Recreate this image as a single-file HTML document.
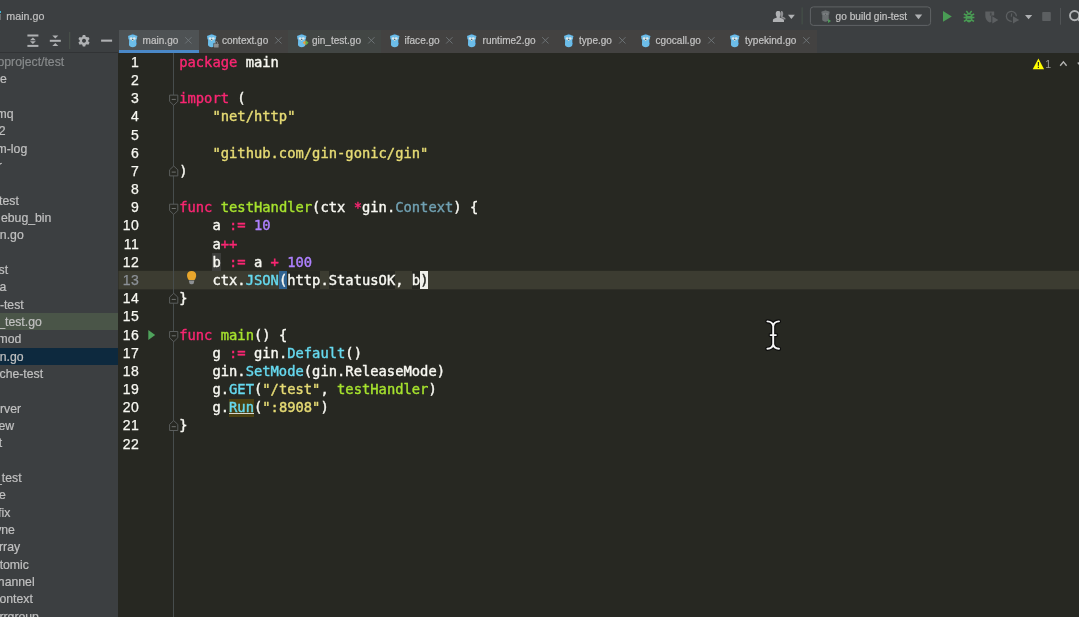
<!DOCTYPE html>
<html lang="en">
<head>
<meta charset="utf-8">
<title>main.go</title>
<style>
*{box-sizing:border-box;margin:0;padding:0}
html,body{width:1079px;height:617px;overflow:hidden;background:#3c3f41}
body{position:relative;font-family:"Liberation Sans",sans-serif;color:#bbbbbb;font-size:12px}
.abs{position:absolute}
#wrap{left:0;top:0;width:1079px;height:617px;will-change:transform}
svg{overflow:visible}
#topbar{left:0;top:0;width:1079px;height:30px;background:#3c3f41}
#title{left:6.3px;top:9.4px;font-size:10.7px;color:#c0c0c0;line-height:14px;-webkit-text-stroke:0.2px #c0c0c0}
#tabs{left:119px;top:30px;width:698px;height:22.5px;background:#434241}
#acttab{left:119px;top:30px;width:79.5px;height:20px;background:#4e5254}
#actline{left:119px;top:49.7px;width:79.5px;height:3.3px;background:#4a88c7}
.tl{position:absolute;top:34px;height:14px;font-size:10.05px;color:#c4c4c4;line-height:14px;white-space:nowrap;letter-spacing:0;-webkit-text-stroke:0.2px #c4c4c4}
.tx{position:absolute;top:37.2px}
#side{left:0;top:52.5px;width:118.4px;height:565px;background:#3c3f41;overflow:hidden}
.si{position:absolute;height:16px;line-height:16px;font-size:12.25px;color:#c0c0c0;white-space:nowrap;-webkit-text-stroke:0.2px #c0c0c0}
#editor{left:118.4px;top:52.5px;width:961px;height:565px;background:#272822;overflow:hidden}
#curline{left:118.4px;top:270.9px;width:961px;height:18.4px;background:#3c3c31}
#gline{left:173.2px;top:52.5px;width:1.2px;height:565px;background:#474d4d}
.ln{position:absolute;left:99.4px;width:40px;text-align:right;font-family:"Liberation Sans",sans-serif;font-size:14px;letter-spacing:0.53px;color:#f8f8f2;line-height:18.184px;height:18.184px;-webkit-text-stroke:0.25px #f8f8f2}
.cl{position:absolute;left:179.2px;white-space:pre;font-family:"DejaVu Sans Mono","Liberation Mono",monospace;font-size:13.8px;color:#f8f8f2;line-height:18.184px;height:18.184px;-webkit-text-stroke:0.4px}
.k{color:#f92672}.f{color:#a6e22e}.s{color:#e6db74}.n{color:#ae81ff}.c{color:#66d9ef}.t{color:#70a0b2}
.hl,.hd,.bm,.bc,.wu{padding:1.05px 0}
.hl{background:#3d3e3b}.hd{background:#272822}.bm{background:#2f6290}.bc{background:#f0f0ea;color:#272822}
.wu{padding:0.2px 0 1.9px;background:#4a4013;box-shadow:inset 0 -4.6px 0 -3.4px #4a4013}
</style>
</head>
<body>
<div id="wrap" class="abs">
<div id="topbar" class="abs"></div>
<div class="abs" style="left:0;top:11.4px;width:1.1px;height:1.8px;background:#3fb6d6"></div>
<div class="abs" style="left:0;top:13.6px;width:1.1px;height:6.2px;background:#6b6f71"></div>
<div id="title" class="abs">main.go</div>
<div id="tabs" class="abs"></div>
<div class="abs" style="left:287.8px;top:30px;width:93.3px;height:22.5px;background:#424644"></div>
<div id="acttab" class="abs"></div>
<div id="actline" class="abs"></div>

<svg class="abs" style="left:0;top:30px" width="119" height="22" viewBox="0 30 119 22">
<g fill="#afb1b3">
<rect x="27.4" y="34.5" width="11" height="2"/><rect x="27.4" y="44.9" width="11" height="2"/>
<path d="M30 40.2L32.9 37.5L35.8 40.2Z"/><path d="M30 41.2L35.8 41.2L32.9 43.9Z"/>
<rect x="49.8" y="39.8" width="11" height="2"/>
<path d="M52.3 35.6L58.3 35.6L55.3 38.6Z"/><path d="M52.3 46L55.3 43L58.3 46Z"/>
<rect x="101.1" y="39.6" width="11" height="2.1"/>
</g>
<rect x="69.2" y="32" width="1" height="17" fill="#4b544d"/>
<g transform="translate(84 40.8)" fill="#afb1b3">
<path fill-rule="evenodd" d="M-1.2 -5.8 L1.2 -5.8 L1.7 -4 L3.4 -3.5 L4.4 -3.9 L5.6 -1.8 L4.3 -0.6 L4.3 0.6 L5.6 1.8 L4.4 3.9 L2.7 3.4 L1.7 4 L1.2 5.8 L-1.2 5.8 L-1.7 4 L-2.7 3.4 L-4.4 3.9 L-5.6 1.8 L-4.3 0.6 L-4.3 -0.6 L-5.6 -1.8 L-4.4 -3.9 L-2.7 -3.4 L-1.7 -4 Z M0 -2 A2 2 0 1 0 0.001 -2 Z"/>
</g>
</svg>
<svg class="abs" style="left:128px;top:33.9px" width="9.4" height="13.3" viewBox="0 0 9.4 13.3"><circle cx="1.2" cy="2.6" r="1.2" fill="#5fb0de"/><circle cx="8.2" cy="2.6" r="1.2" fill="#5fb0de"/><path d="M0.3 4.2 C0.3 -0.6 9.1 -0.6 9.1 4.2 C9.1 5.2 8.4 5.4 8.3 6 L8.4 10.8 C8.4 14 1 14 1 10.8 L1.1 6 C1 5.4 0.3 5.2 0.3 4.2 Z" fill="#6cbde9"/><ellipse cx="3.2" cy="4.5" rx="1.4" ry="1.25" fill="#dde6e8"/><ellipse cx="6.2" cy="4.5" rx="1.4" ry="1.25" fill="#dde6e8"/><circle cx="4.7" cy="5.3" r="0.65" fill="#3a3a3a"/><rect x="4.2" y="5.9" width="1" height="1.1" fill="#e9d9c0"/><rect x="4.2" y="-0.1" width="1" height="0.9" fill="#3a86c8"/><circle cx="8.5" cy="9.4" r="0.55" fill="#3a86c8"/></svg>
<div class="tl" style="left:142.6px">main.go</div>
<svg class="tx" style="left:184.75px" width="6.7" height="6.7" viewBox="0 0 6.7 6.7"><path d="M0.2 0.2L6.5 6.5M6.5 0.2L0.2 6.5" stroke="#70767a" stroke-width="0.9" fill="none"/></svg>
<svg class="abs" style="left:206.9px;top:33.9px" width="9.4" height="13.3" viewBox="0 0 9.4 13.3"><circle cx="1.2" cy="2.6" r="1.2" fill="#5fb0de"/><circle cx="8.2" cy="2.6" r="1.2" fill="#5fb0de"/><path d="M0.3 4.2 C0.3 -0.6 9.1 -0.6 9.1 4.2 C9.1 5.2 8.4 5.4 8.3 6 L8.4 10.8 C8.4 14 1 14 1 10.8 L1.1 6 C1 5.4 0.3 5.2 0.3 4.2 Z" fill="#6cbde9"/><ellipse cx="3.2" cy="4.5" rx="1.4" ry="1.25" fill="#dde6e8"/><ellipse cx="6.2" cy="4.5" rx="1.4" ry="1.25" fill="#dde6e8"/><circle cx="4.7" cy="5.3" r="0.65" fill="#3a3a3a"/><rect x="4.2" y="5.9" width="1" height="1.1" fill="#e9d9c0"/><rect x="4.2" y="-0.1" width="1" height="0.9" fill="#3a86c8"/><circle cx="8.5" cy="9.4" r="0.55" fill="#3a86c8"/></svg>
<div class="tl" style="left:221.9px">context.go</div>
<svg class="tx" style="left:275.25px" width="6.7" height="6.7" viewBox="0 0 6.7 6.7"><path d="M0.2 0.2L6.5 6.5M6.5 0.2L0.2 6.5" stroke="#70767a" stroke-width="0.9" fill="none"/></svg>
<svg class="abs" style="left:297.4px;top:33.9px" width="9.4" height="13.3" viewBox="0 0 9.4 13.3"><circle cx="1.2" cy="2.6" r="1.2" fill="#5fb0de"/><circle cx="8.2" cy="2.6" r="1.2" fill="#5fb0de"/><path d="M0.3 4.2 C0.3 -0.6 9.1 -0.6 9.1 4.2 C9.1 5.2 8.4 5.4 8.3 6 L8.4 10.8 C8.4 14 1 14 1 10.8 L1.1 6 C1 5.4 0.3 5.2 0.3 4.2 Z" fill="#6cbde9"/><ellipse cx="3.2" cy="4.5" rx="1.4" ry="1.25" fill="#dde6e8"/><ellipse cx="6.2" cy="4.5" rx="1.4" ry="1.25" fill="#dde6e8"/><circle cx="4.7" cy="5.3" r="0.65" fill="#3a3a3a"/><rect x="4.2" y="5.9" width="1" height="1.1" fill="#e9d9c0"/><rect x="4.2" y="-0.1" width="1" height="0.9" fill="#3a86c8"/><circle cx="8.5" cy="9.4" r="0.55" fill="#3a86c8"/></svg>
<div class="tl" style="left:311.9px">gin_test.go</div>
<svg class="tx" style="left:367.65px" width="6.7" height="6.7" viewBox="0 0 6.7 6.7"><path d="M0.2 0.2L6.5 6.5M6.5 0.2L0.2 6.5" stroke="#70767a" stroke-width="0.9" fill="none"/></svg>
<svg class="abs" style="left:389.6px;top:33.9px" width="9.4" height="13.3" viewBox="0 0 9.4 13.3"><circle cx="1.2" cy="2.6" r="1.2" fill="#5fb0de"/><circle cx="8.2" cy="2.6" r="1.2" fill="#5fb0de"/><path d="M0.3 4.2 C0.3 -0.6 9.1 -0.6 9.1 4.2 C9.1 5.2 8.4 5.4 8.3 6 L8.4 10.8 C8.4 14 1 14 1 10.8 L1.1 6 C1 5.4 0.3 5.2 0.3 4.2 Z" fill="#6cbde9"/><ellipse cx="3.2" cy="4.5" rx="1.4" ry="1.25" fill="#dde6e8"/><ellipse cx="6.2" cy="4.5" rx="1.4" ry="1.25" fill="#dde6e8"/><circle cx="4.7" cy="5.3" r="0.65" fill="#3a3a3a"/><rect x="4.2" y="5.9" width="1" height="1.1" fill="#e9d9c0"/><rect x="4.2" y="-0.1" width="1" height="0.9" fill="#3a86c8"/><circle cx="8.5" cy="9.4" r="0.55" fill="#3a86c8"/></svg>
<div class="tl" style="left:404.5px">iface.go</div>
<svg class="tx" style="left:445.84999999999997px" width="6.7" height="6.7" viewBox="0 0 6.7 6.7"><path d="M0.2 0.2L6.5 6.5M6.5 0.2L0.2 6.5" stroke="#70767a" stroke-width="0.9" fill="none"/></svg>
<svg class="abs" style="left:467.2px;top:33.9px" width="9.4" height="13.3" viewBox="0 0 9.4 13.3"><circle cx="1.2" cy="2.6" r="1.2" fill="#5fb0de"/><circle cx="8.2" cy="2.6" r="1.2" fill="#5fb0de"/><path d="M0.3 4.2 C0.3 -0.6 9.1 -0.6 9.1 4.2 C9.1 5.2 8.4 5.4 8.3 6 L8.4 10.8 C8.4 14 1 14 1 10.8 L1.1 6 C1 5.4 0.3 5.2 0.3 4.2 Z" fill="#6cbde9"/><ellipse cx="3.2" cy="4.5" rx="1.4" ry="1.25" fill="#dde6e8"/><ellipse cx="6.2" cy="4.5" rx="1.4" ry="1.25" fill="#dde6e8"/><circle cx="4.7" cy="5.3" r="0.65" fill="#3a3a3a"/><rect x="4.2" y="5.9" width="1" height="1.1" fill="#e9d9c0"/><rect x="4.2" y="-0.1" width="1" height="0.9" fill="#3a86c8"/><circle cx="8.5" cy="9.4" r="0.55" fill="#3a86c8"/></svg>
<div class="tl" style="left:482.6px">runtime2.go</div>
<svg class="tx" style="left:541.65px" width="6.7" height="6.7" viewBox="0 0 6.7 6.7"><path d="M0.2 0.2L6.5 6.5M6.5 0.2L0.2 6.5" stroke="#70767a" stroke-width="0.9" fill="none"/></svg>
<svg class="abs" style="left:563.6px;top:33.9px" width="9.4" height="13.3" viewBox="0 0 9.4 13.3"><circle cx="1.2" cy="2.6" r="1.2" fill="#5fb0de"/><circle cx="8.2" cy="2.6" r="1.2" fill="#5fb0de"/><path d="M0.3 4.2 C0.3 -0.6 9.1 -0.6 9.1 4.2 C9.1 5.2 8.4 5.4 8.3 6 L8.4 10.8 C8.4 14 1 14 1 10.8 L1.1 6 C1 5.4 0.3 5.2 0.3 4.2 Z" fill="#6cbde9"/><ellipse cx="3.2" cy="4.5" rx="1.4" ry="1.25" fill="#dde6e8"/><ellipse cx="6.2" cy="4.5" rx="1.4" ry="1.25" fill="#dde6e8"/><circle cx="4.7" cy="5.3" r="0.65" fill="#3a3a3a"/><rect x="4.2" y="5.9" width="1" height="1.1" fill="#e9d9c0"/><rect x="4.2" y="-0.1" width="1" height="0.9" fill="#3a86c8"/><circle cx="8.5" cy="9.4" r="0.55" fill="#3a86c8"/></svg>
<div class="tl" style="left:579.0px">type.go</div>
<svg class="tx" style="left:618.9499999999999px" width="6.7" height="6.7" viewBox="0 0 6.7 6.7"><path d="M0.2 0.2L6.5 6.5M6.5 0.2L0.2 6.5" stroke="#70767a" stroke-width="0.9" fill="none"/></svg>
<svg class="abs" style="left:641px;top:33.9px" width="9.4" height="13.3" viewBox="0 0 9.4 13.3"><circle cx="1.2" cy="2.6" r="1.2" fill="#5fb0de"/><circle cx="8.2" cy="2.6" r="1.2" fill="#5fb0de"/><path d="M0.3 4.2 C0.3 -0.6 9.1 -0.6 9.1 4.2 C9.1 5.2 8.4 5.4 8.3 6 L8.4 10.8 C8.4 14 1 14 1 10.8 L1.1 6 C1 5.4 0.3 5.2 0.3 4.2 Z" fill="#6cbde9"/><ellipse cx="3.2" cy="4.5" rx="1.4" ry="1.25" fill="#dde6e8"/><ellipse cx="6.2" cy="4.5" rx="1.4" ry="1.25" fill="#dde6e8"/><circle cx="4.7" cy="5.3" r="0.65" fill="#3a3a3a"/><rect x="4.2" y="5.9" width="1" height="1.1" fill="#e9d9c0"/><rect x="4.2" y="-0.1" width="1" height="0.9" fill="#3a86c8"/><circle cx="8.5" cy="9.4" r="0.55" fill="#3a86c8"/></svg>
<div class="tl" style="left:655.6px">cgocall.go</div>
<svg class="tx" style="left:707.9499999999999px" width="6.7" height="6.7" viewBox="0 0 6.7 6.7"><path d="M0.2 0.2L6.5 6.5M6.5 0.2L0.2 6.5" stroke="#70767a" stroke-width="0.9" fill="none"/></svg>
<svg class="abs" style="left:730.1px;top:33.9px" width="9.4" height="13.3" viewBox="0 0 9.4 13.3"><circle cx="1.2" cy="2.6" r="1.2" fill="#5fb0de"/><circle cx="8.2" cy="2.6" r="1.2" fill="#5fb0de"/><path d="M0.3 4.2 C0.3 -0.6 9.1 -0.6 9.1 4.2 C9.1 5.2 8.4 5.4 8.3 6 L8.4 10.8 C8.4 14 1 14 1 10.8 L1.1 6 C1 5.4 0.3 5.2 0.3 4.2 Z" fill="#6cbde9"/><ellipse cx="3.2" cy="4.5" rx="1.4" ry="1.25" fill="#dde6e8"/><ellipse cx="6.2" cy="4.5" rx="1.4" ry="1.25" fill="#dde6e8"/><circle cx="4.7" cy="5.3" r="0.65" fill="#3a3a3a"/><rect x="4.2" y="5.9" width="1" height="1.1" fill="#e9d9c0"/><rect x="4.2" y="-0.1" width="1" height="0.9" fill="#3a86c8"/><circle cx="8.5" cy="9.4" r="0.55" fill="#3a86c8"/></svg>
<div class="tl" style="left:745.0px">typekind.go</div>
<svg class="tx" style="left:803.35px" width="6.7" height="6.7" viewBox="0 0 6.7 6.7"><path d="M0.2 0.2L6.5 6.5M6.5 0.2L0.2 6.5" stroke="#70767a" stroke-width="0.9" fill="none"/></svg>
<svg class="abs" style="left:0;top:0" width="1" height="1"><rect x="213.4" y="43.2" width="5.6" height="4.6" fill="#434241"/><rect x="214" y="43.8" width="4.6" height="3.8" rx="0.5" fill="#8c8f91"/><path d="M215 43.8 L215 42.8 C215 41.2 217.6 41.2 217.6 42.8 L217.6 43.8" fill="none" stroke="#8c8f91" stroke-width="0.9"/></svg>
<svg class="abs" style="left:0;top:0" width="1" height="1"><path d="M305.6 40.2L305.6 45.2L302.6 42.7Z" fill="#e8a33d"/><path d="M305.9 40.2L308.6 42.7L305.9 45.2Z" fill="#5fb04a"/></svg>
<svg class="abs" style="left:760px;top:0" width="319" height="30" viewBox="760 0 319 30">
<g fill="#afb1b3">
<path opacity="0.7" d="M781 11 C783.3 11 783.3 13 783.2 14.2 C783.1 15.4 782.7 16 782.5 16.4 C783.6 17 785.7 17.6 785.7 19.2 L784.5 19.6 C783.8 18.4 781.6 17.8 780.6 17.3 Z"/>
<path d="M778.2 10.9 C780.7 10.9 780.7 13 780.6 14.2 C780.5 15.8 779.9 16.3 779.7 16.9 L779.7 17.6 C781 18.2 784 18.6 784 20.5 L784 21.9 L772.9 21.9 L772.9 20.5 C772.9 18.6 775.6 18.2 776.8 17.6 L776.8 16.9 C776.4 16.3 775.9 15.8 775.8 14.2 C775.7 13 775.7 10.9 778.2 10.9 Z"/>
<path d="M788 14.8L794.8 14.8L791.4 19Z"/>
<path d="M914.8 14.6L922.2 14.6L918.5 19.2Z"/>
<path d="M1025 15L1032.2 15L1028.6 19.3Z"/>
</g>
<rect x="801.6" y="7.4" width="1" height="17" fill="#46534a"/>
<rect x="810.4" y="6.9" width="120.2" height="18.5" rx="3" ry="3" fill="none" stroke="#606365" stroke-width="1"/>
<path d="M943 11.1L951.8 16.4L943 21.7Z" fill="#499c54"/>
<g fill="#499c54">
<ellipse cx="969" cy="17.6" rx="3.5" ry="4.9"/>
</g>
<g stroke="#499c54" stroke-width="1.5" fill="none">
<path d="M966.3 10.9L968 12.9M971.7 10.9L970 12.9M963.8 14L966.6 15.2M974.2 14L971.4 15.2M963.6 17.5L966 17.5M974.4 17.5L972 17.5M963.9 21.4L966.5 20M974.1 21.4L971.5 20"/>
</g>
<path d="M967.4 15.4L970.6 15.4M967.2 19.2L970.8 19.2" stroke="#3c3f41" stroke-width="1.1"/>
<g fill="#5c5f61">
<path d="M985.3 11.6L994.2 11.6L994.2 15.6L991.3 15.6L991.3 22L989.6 22.6 C986.5 21 985.3 18.5 985.3 15.5Z"/>
<path d="M992.3 16.3L998.4 19.9L992.3 23.4Z"/>
<rect x="989.9" y="12.6" width="1.7" height="3" fill="#45484a"/>
<path d="M1013 16.3L1019.3 19.9L1013 23.4Z"/>
<rect x="1042.2" y="12.1" width="8.6" height="9" rx="0.8"/>
</g>
<path d="M1016.4 16.2 A5 5 0 1 0 1011.7 21.3" fill="none" stroke="#5c5f61" stroke-width="1.3"/>
<path d="M1011.7 13.4L1011.3 16.8" stroke="#5c5f61" stroke-width="1.1" fill="none"/>
<rect x="1060" y="7.9" width="1" height="16.8" fill="#515456"/>
<circle cx="1074.6" cy="15.6" r="4.6" fill="none" stroke="#afb1b3" stroke-width="1.9"/><path d="M1077.9 19L1081 22.2" stroke="#afb1b3" stroke-width="1.9"/>
</svg>
<svg class="abs" style="left:820.8px;top:10.4px" width="9" height="11.8" viewBox="0 0 9.4 13.3"><circle cx="1.2" cy="2.6" r="1.2" fill="#65696b"/><circle cx="8.2" cy="2.6" r="1.2" fill="#65696b"/><path d="M0.3 4.2 C0.3 -0.6 9.1 -0.6 9.1 4.2 C9.1 5.2 8.4 5.4 8.3 6 L8.4 10.8 C8.4 14 1 14 1 10.8 L1.1 6 C1 5.4 0.3 5.2 0.3 4.2 Z" fill="#6b6f71"/><ellipse cx="3.2" cy="4.5" rx="1.4" ry="1.25" fill="#7d8183"/><ellipse cx="6.2" cy="4.5" rx="1.4" ry="1.25" fill="#7d8183"/><circle cx="4.7" cy="5.3" r="0.65" fill="#55595b"/><rect x="4.2" y="5.9" width="1" height="1.1" fill="#777b7d"/><rect x="4.2" y="-0.1" width="1" height="0.9" fill="#5f6365"/><circle cx="8.5" cy="9.4" r="0.55" fill="#5f6365"/></svg>
<div class="abs" style="left:828px;top:18.6px;width:0;height:0;border-left:3px solid #4c9a58;border-top:2px solid transparent;border-bottom:2px solid transparent"></div>
<div class="tl" style="left:835.6px;top:9.6px;font-size:10.15px">go build gin-test</div>
<div id="side" class="abs"></div>
<div class="abs" style="left:0;top:52px;width:118.4px;height:1px;background:#313335"></div>
<div class="abs" style="left:0;top:313px;width:118.4px;height:17.3px;background:#4a5548"></div>
<div class="abs" style="left:0;top:347.6px;width:118.4px;height:17.3px;background:#0d293e"></div>
<div class="si" style="right:1014.8px;top:53.95px;color:#878a8b;-webkit-text-stroke-color:#878a8b">oproject/test</div>
<div class="si" style="right:1072.1px;top:71.28px">e</div>
<div class="si" style="right:1065.4px;top:105.94px">mq</div>
<div class="si" style="right:1073.5px;top:123.27px">2</div>
<div class="si" style="right:1051.8px;top:140.60px">m-log</div>
<div class="si" style="right:1077.1px;top:157.93px">r</div>
<div class="si" style="right:1060.2px;top:192.59px">test</div>
<div class="si" style="right:1027.6px;top:209.92px">ebug_bin</div>
<div class="si" style="right:1055.3px;top:227.25px">n.go</div>
<div class="si" style="right:1070.9px;top:261.91px">st</div>
<div class="si" style="right:1072.6px;top:279.24px">a</div>
<div class="si" style="right:1055.3px;top:296.57px">-test</div>
<div class="si" style="right:1037.2px;top:313.90px">_test.go</div>
<div class="si" style="right:1057.7px;top:331.23px">mod</div>
<div class="si" style="right:1055.4px;top:348.56px">n.go</div>
<div class="si" style="right:1035.9px;top:365.89px">che-test</div>
<div class="si" style="right:1057.9px;top:400.55px">rver</div>
<div class="si" style="right:1064.8px;top:417.88px">ew</div>
<div class="si" style="right:1076.8px;top:435.21px">t</div>
<div class="si" style="right:1057.4px;top:469.87px">_test</div>
<div class="si" style="right:1073.2px;top:487.20px">e</div>
<div class="si" style="right:1068.7px;top:504.53px">fix</div>
<div class="si" style="right:1064.1px;top:521.86px">yne</div>
<div class="si" style="right:1058.9px;top:539.19px">rray</div>
<div class="si" style="right:1050.1px;top:556.52px">tomic</div>
<div class="si" style="right:1044.4px;top:573.85px">hannel</div>
<div class="si" style="right:1046.2px;top:591.18px">ontext</div>
<div class="si" style="right:1040.1px;top:608.51px">rrgroup</div>
<div id="editor" class="abs"></div><svg class="abs" style="left:0;top:0" width="1079" height="617"><rect x="118.4" y="270.85" width="961" height="18.5" fill="#3c3c31"/></svg><div id="gline" class="abs"></div>
<svg class="abs" style="left:0;top:0" width="1" height="1"><path d="M169.6 95.1L177.8 95.1L177.8 101.4L173.7 105.3L169.6 101.4Z" fill="#272822" stroke="#5b5e5d" stroke-width="1"/><path d="M171.7 99.4L175.8 99.4" stroke="#6f726f" stroke-width="1"/></svg>
<svg class="abs" style="left:0;top:0" width="1" height="1"><path d="M169.6 204.2L177.8 204.2L177.8 210.5L173.7 214.4L169.6 210.5Z" fill="#272822" stroke="#5b5e5d" stroke-width="1"/><path d="M171.7 208.5L175.8 208.5" stroke="#6f726f" stroke-width="1"/></svg>
<svg class="abs" style="left:0;top:0" width="1" height="1"><path d="M169.6 331.5L177.8 331.5L177.8 337.8L173.7 341.7L169.6 337.8Z" fill="#272822" stroke="#5b5e5d" stroke-width="1"/><path d="M171.7 335.8L175.8 335.8" stroke="#6f726f" stroke-width="1"/></svg>
<svg class="abs" style="left:0;top:0" width="1" height="1"><path d="M173.7 166.0L177.8 169.8L177.8 175.9L169.6 175.9L169.6 169.8Z" fill="#272822" stroke="#5b5e5d" stroke-width="1"/><path d="M171.7 172.1L175.8 172.1" stroke="#6f726f" stroke-width="1"/></svg>
<svg class="abs" style="left:0;top:0" width="1" height="1"><path d="M173.7 293.3L177.8 297.1L177.8 303.2L169.6 303.2L169.6 297.1Z" fill="#272822" stroke="#5b5e5d" stroke-width="1"/><path d="M171.7 299.4L175.8 299.4" stroke="#6f726f" stroke-width="1"/></svg>
<svg class="abs" style="left:0;top:0" width="1" height="1"><path d="M173.7 420.6L177.8 424.4L177.8 430.5L169.6 430.5L169.6 424.4Z" fill="#272822" stroke="#5b5e5d" stroke-width="1"/><path d="M171.7 426.7L175.8 426.7" stroke="#6f726f" stroke-width="1"/></svg>
<svg class="abs" style="left:0;top:0" width="1" height="1"><path d="M148.3 329.9L155.2 335.0L148.3 340.0Z" fill="#4fa35c"/></svg>
<svg class="abs" style="left:0;top:0" width="1" height="1"><path d="M191.6 270.9 C197.2 270.9 197 277 194.5 279.9 L188.7 279.9 C186.2 277 186 270.9 191.6 270.9Z" fill="#e8a62c"/><path d="M188.9 280.6L194.3 280.6L193.7 283.6 C193 284.5 190.2 284.5 189.5 283.6Z" fill="#8e9194"/></svg>
<div class="ln" style="top:53.17px">1</div>
<div class="cl" style="top:53.24px"><span class="k">package</span> main</div>
<div class="ln" style="top:71.17px">2</div>
<div class="ln" style="top:89.17px">3</div>
<div class="cl" style="top:89.24px"><span class="k">import</span> (</div>
<div class="ln" style="top:107.17px">4</div>
<div class="cl" style="top:107.24px">    <span class="s">"net/http"</span></div>
<div class="ln" style="top:126.17px">5</div>
<div class="ln" style="top:144.17px">6</div>
<div class="cl" style="top:144.24px">    <span class="s">"github.com/gin-gonic/gin"</span></div>
<div class="ln" style="top:162.17px">7</div>
<div class="cl" style="top:162.24px">)</div>
<div class="ln" style="top:180.17px">8</div>
<div class="ln" style="top:198.17px">9</div>
<div class="cl" style="top:198.24px"><span class="k">func</span> <span class="f">testHandler</span>(ctx <span class="k">*</span>gin.<span class="t">Context</span>) {</div>
<div class="ln" style="top:216.17px">10</div>
<div class="cl" style="top:216.24px">    a <span class="k">:=</span> <span class="n">10</span></div>
<div class="ln" style="top:235.17px">11</div>
<div class="cl" style="top:235.24px">    a<span class="k">++</span></div>
<div class="ln" style="top:253.17px">12</div>
<div class="cl" style="top:253.24px">    <span class="hl">b</span> <span class="k">:=</span> a <span class="k">+</span> <span class="n">100</span></div>
<div class="ln" style="top:271.17px;color:#8b9096;-webkit-text-stroke-color:#8b9096">13</div>
<div class="cl" style="top:271.24px">    ctx.<span class="c">JSON</span><span class="bm">(</span><span class="hd">http</span>.<span class="hd">StatusOK</span>, <span class="hd">b</span><span class="bc">)</span></div>
<div class="ln" style="top:289.17px">14</div>
<div class="cl" style="top:289.24px">}</div>
<div class="ln" style="top:307.17px">15</div>
<div class="ln" style="top:326.17px">16</div>
<div class="cl" style="top:326.24px"><span class="k">func</span> <span class="f">main</span>() {</div>
<div class="ln" style="top:344.17px">17</div>
<div class="cl" style="top:344.24px">    g <span class="k">:=</span> gin.<span class="c">Default</span>()</div>
<div class="ln" style="top:362.17px">18</div>
<div class="cl" style="top:362.24px">    gin.<span class="c">SetMode</span>(gin.ReleaseMode)</div>
<div class="ln" style="top:380.17px">19</div>
<div class="cl" style="top:380.24px">    g.<span class="c">GET</span>(<span class="s">"/test"</span>, <span class="f">testHandler</span>)</div>
<div class="ln" style="top:398.17px">20</div>
<div class="cl" style="top:398.24px">    g.<span class="c wu">Run</span>(<span class="s">":8908"</span>)</div>
<div class="ln" style="top:416.17px">21</div>
<div class="cl" style="top:416.24px">}</div>
<div class="ln" style="top:435.17px">22</div>
<div class="abs" style="left:229.2px;top:412.9px;width:24.8px;height:1.1px;background:#d6d6ce"></div>
<svg class="abs" style="left:0;top:0" width="1" height="1">
<path d="M1038.4 58.6L1044.1 69.2L1032.7 69.2Z" fill="#ffff00"/>
<rect x="1037.8" y="62" width="1.2" height="3.8" fill="#2b2b20"/><rect x="1037.8" y="66.7" width="1.2" height="1.3" fill="#2b2b20"/>
<path d="M1060.2 65.8L1063.4 61.9L1066.6 65.8" fill="none" stroke="#b4b4b2" stroke-width="1.4"/>
<path d="M1077.8 62.5L1080 65" fill="none" stroke="#b4b4b2" stroke-width="1.4"/>
</svg>
<div class="abs" style="left:1045.3px;top:57.3px;font-size:10.6px;line-height:14px;color:#9c9e9a">1</div>
<svg class="abs" style="left:0;top:0" width="1" height="1"><path d="M767.4 321.4 Q772.4 321.6 773.2 326 Q774 321.6 779 321.4 M773.2 325 L773.2 345 M767.4 348.8 Q772.4 348.6 773.2 344.2 Q774 348.6 779 348.8 M770.6 335.1 L775.9 335.1" fill="none" stroke="#0c0c0c" stroke-width="4.2" stroke-linecap="round" stroke-linejoin="round"/><path d="M767.4 321.4 Q772.4 321.6 773.2 326 Q774 321.6 779 321.4 M773.2 325 L773.2 345 M767.4 348.8 Q772.4 348.6 773.2 344.2 Q774 348.6 779 348.8 M770.6 335.1 L775.9 335.1" fill="none" stroke="#f6f6f6" stroke-width="1.9" stroke-linecap="round"/></svg>
</div>
</body>
</html>
